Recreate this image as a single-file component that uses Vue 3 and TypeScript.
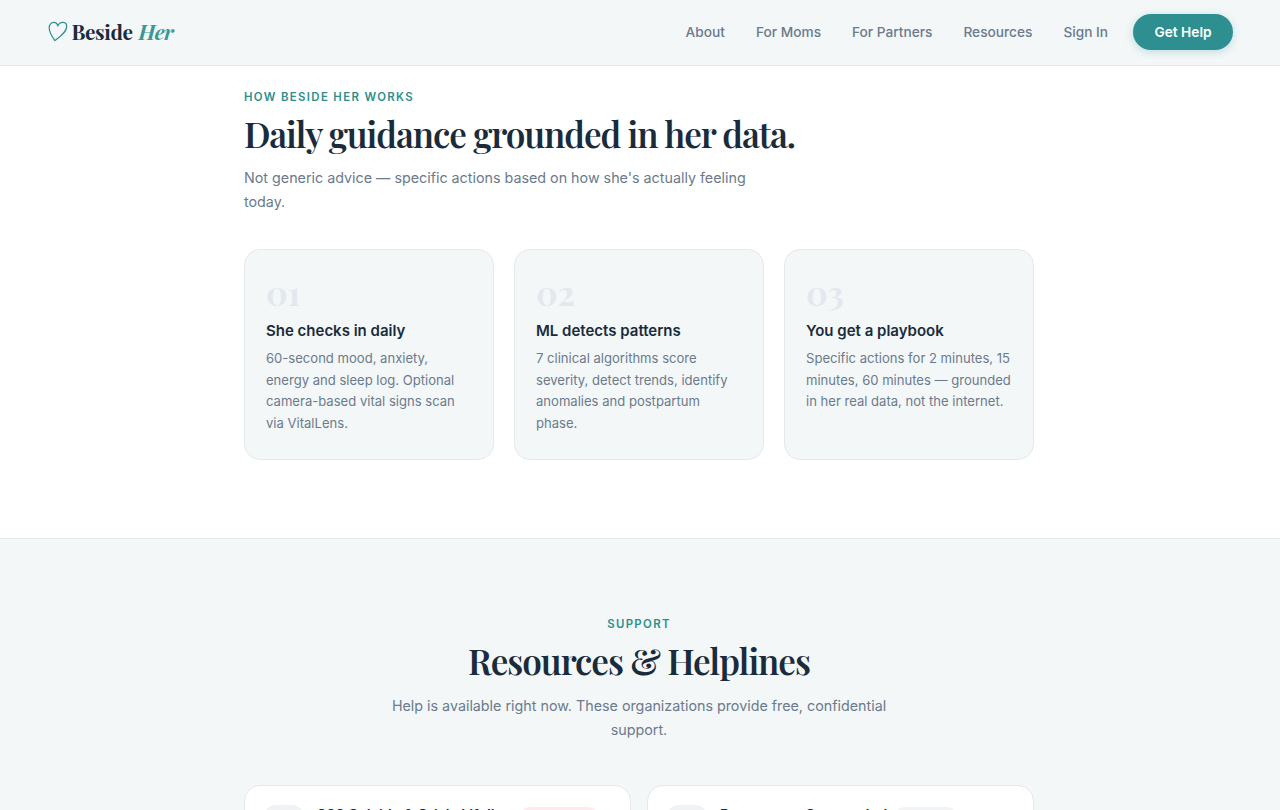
<script setup lang="ts">
interface Step {
  num: string
  title: string
  text: string[]
}

interface Helpline {
  name: string
  tone: 'rose' | 'grey'
}

const links = ['About', 'For Moms', 'For Partners', 'Resources', 'Sign In']

const steps: Step[] = [
  {
    num: '01',
    title: 'She checks in daily',
    text: ['60-second mood, anxiety,', 'energy and sleep log. Optional', 'camera-based vital signs scan', 'via VitalLens.'],
  },
  {
    num: '02',
    title: 'ML detects patterns',
    text: ['7 clinical algorithms score', 'severity, detect trends, identify', 'anomalies and postpartum', 'phase.'],
  },
  {
    num: '03',
    title: 'You get a playbook',
    text: ['Specific actions for 2 minutes, 15', 'minutes, 60 minutes — grounded', 'in her real data, not the internet.'],
  },
]

const helplines: Helpline[] = [
  { name: '988 Suicide & Crisis Lifeline', tone: 'rose' },
  { name: 'Postpartum Support Intl', tone: 'grey' },
]
</script>

<template>
  <div class="page">
    <nav class="nav">
      <a class="logo" href="#">
        <svg class="heart" viewBox="0 0 20 21" fill="none" stroke="currentColor" stroke-width="1.2" stroke-linejoin="round">
          <path d="M6.9 19.6C4.6 16.3 1.2 12.2 1.2 7.1C1.2 3.6 3.2 1.4 5.7 1.4C7.9 1.4 9.4 2.8 9.7 4.9C10.9 2.5 12.8 1.2 15 1.3C17.4 1.4 18.8 3.2 18.7 5.7C18.5 11 12.2 15.6 6.9 19.6Z" />
        </svg>
        <span>Beside</span>
        <em>Her</em>
      </a>
      <div class="links">
        <a v-for="link in links" :key="link" href="#">{{ link }}</a>
        <button class="help">Get Help</button>
      </div>
    </nav>

    <section class="how">
      <div class="container">
        <p class="eyebrow">HOW BESIDE HER WORKS</p>
        <h2 class="heading">Daily guidance grounded in her data.</h2>
        <p class="lead">Not generic advice — specific actions based on how she's actually feeling<br />today.</p>
        <div class="steps">
          <article v-for="step in steps" :key="step.num" class="step">
            <div class="num">{{ step.num }}</div>
            <h3>{{ step.title }}</h3>
            <p><template v-for="(line, i) in step.text" :key="i"><br v-if="i" />{{ line }}</template></p>
          </article>
        </div>
      </div>
    </section>

    <section class="support">
      <div class="container">
        <p class="eyebrow">SUPPORT</p>
        <h2 class="heading">Resources &amp; Helplines</h2>
        <p class="lead">Help is available right now. These organizations provide free, confidential<br />support.</p>
        <div class="lines">
          <article v-for="line in helplines" :key="line.name" class="line-card">
            <div class="line-icon"></div>
            <h4>{{ line.name }}</h4>
            <span class="tag" :class="line.tone"></span>
          </article>
        </div>
      </div>
    </section>
  </div>
</template>

<style>
body {
  margin: 0;
  overflow: hidden;
}
</style>

<style scoped>
.page {
  height: 810px;
  overflow: hidden;
  background: #fff;
  color: #1a2b3c;
  font-family: Inter, "Liberation Sans", sans-serif;
}

p, h2, h3, h4 {
  margin: 0;
}

a {
  color: inherit;
  text-decoration: none;
}

.nav {
  box-sizing: border-box;
  height: 66px;
  padding: 0 47px 2px 48px;
  display: flex;
  align-items: center;
  justify-content: space-between;
  background: #f3f7f8;
  border-bottom: 1px solid #e2e6ea;
}

.logo {
  display: flex;
  align-items: center;
  font-family: "Playfair Display", "Liberation Serif", serif;
  font-size: 20.8px;
  font-weight: 700;
  line-height: 28px;
  letter-spacing: -0.42px;
}

.logo span,
.logo em {
  margin-bottom: 2px;
}

.heart {
  width: 20px;
  height: 21px;
  margin-right: 3.5px;
  color: #2d8f8c;
}

.logo em {
  margin-left: 6px;
  color: #3a9793;
}

.links {
  display: flex;
  align-items: center;
  gap: 31px;
  color: #6b7a8d;
  font-size: 13.7px;
  font-weight: 500;
}

.help {
  width: 100px;
  height: 36px;
  margin-left: -6px;
  padding: 0;
  border: 0;
  border-radius: 18px;
  background: #2d8f8f;
  box-shadow: 0 2px 8px rgba(45, 143, 143, 0.25);
  color: #fff;
  font: 600 13.7px Inter, sans-serif;
}

.container {
  width: 790px;
  margin: 0 auto;
  padding-right: 2px;
}

.how {
  box-sizing: border-box;
  height: 472px;
  padding-top: 22px;
}

.eyebrow {
  height: 18px;
  color: #2d8f8c;
  font-size: 11.4px;
  font-weight: 600;
  line-height: 18px;
  letter-spacing: 1.35px;
}

.heading {
  height: 44px;
  margin-top: 6px;
  font-family: "Playfair Display", "Liberation Serif", serif;
  font-size: 35px;
  font-weight: 600;
  line-height: 44px;
  letter-spacing: -1.05px;
  white-space: nowrap;
}

.lead {
  margin-top: 10px;
  color: #6b7a8d;
  font-size: 14.3px;
  line-height: 24px;
  white-space: nowrap;
}

.steps {
  display: grid;
  grid-template-columns: repeat(3, 1fr);
  gap: 20px;
  margin-top: 35px;
}

.step {
  box-sizing: border-box;
  height: 211px;
  padding: 24px 21px 0;
  border: 1px solid #e4e9ee;
  border-radius: 16px;
  background: #f3f7f8;
}

.num {
  height: 36px;
  color: #e3e8ee;
  font-family: "Playfair Display", "Liberation Serif", serif;
  font-size: 33.5px;
  font-weight: 700;
  line-height: 36px;
}

.step h3 {
  margin-top: 11px;
  font-size: 15px;
  font-weight: 600;
  line-height: 20px;
}

.step p {
  margin-top: 7px;
  color: #6b7a8d;
  font-size: 13.07px;
  line-height: 21.6px;
  white-space: nowrap;
}

.support {
  height: 272px;
  box-sizing: border-box;
  padding-top: 76px;
  border-top: 1px solid #e4e9ec;
  background: #f3f7f8;
  text-align: center;
}

.support .lead {
  margin-top: 11px;
}

.lines {
  display: grid;
  grid-template-columns: 1fr 1fr;
  gap: 16px;
  margin-top: 43px;
}

.line-card {
  box-sizing: border-box;
  height: 100px;
  padding: 19px 20px;
  display: flex;
  align-items: flex-start;
  border: 1px solid #e4e9ec;
  border-radius: 16px;
  background: #fff;
}

.line-icon {
  width: 38px;
  height: 38px;
  border-radius: 10px;
  background: #f0f3f3;
}

.line-card h4 {
  margin-left: 14px;
  font-size: 14.5px;
  font-weight: 600;
  line-height: 20px;
  white-space: nowrap;
}

.tag {
  width: 62px;
  height: 19px;
  margin: 2px 0 0 8px;
  border-radius: 10px;
  background: #f1f3f4;
}

.tag.rose {
  width: 78px;
  background: #fdeaee;
}
</style>
